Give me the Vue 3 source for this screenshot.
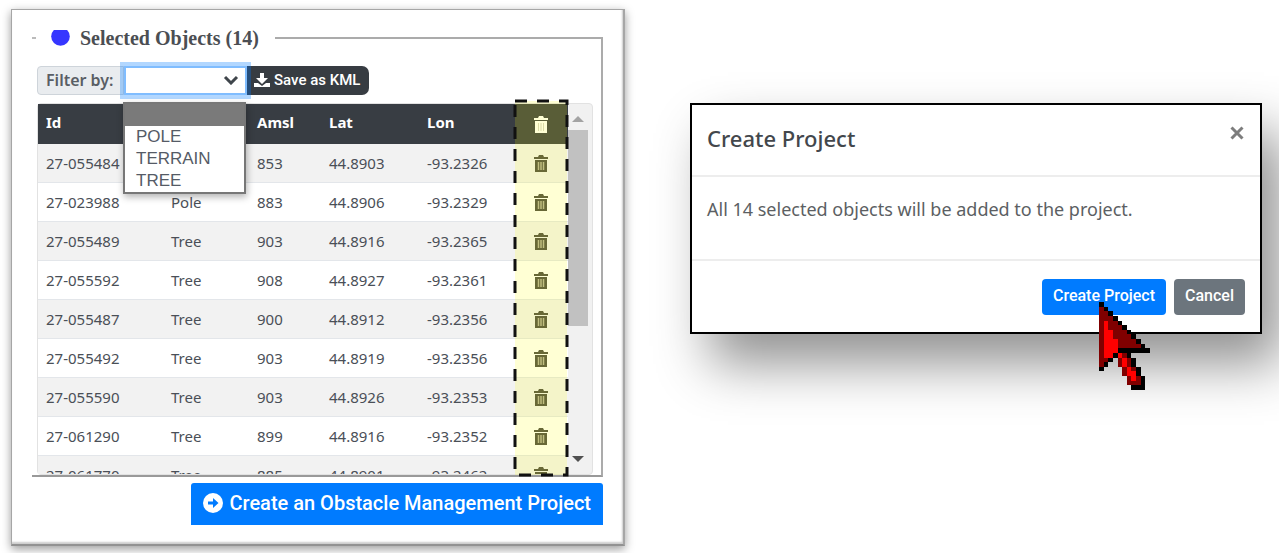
<script setup>
import { ref } from 'vue'

const filter = ref('')
const options = ['', 'POLE', 'TERRAIN', 'TREE']

const rows = [
  { id: '27-055484', type: 'Tree', amsl: 853, lat: '44.8903', lon: '-93.2326' },
  { id: '27-023988', type: 'Pole', amsl: 883, lat: '44.8906', lon: '-93.2329' },
  { id: '27-055489', type: 'Tree', amsl: 903, lat: '44.8916', lon: '-93.2365' },
  { id: '27-055592', type: 'Tree', amsl: 908, lat: '44.8927', lon: '-93.2361' },
  { id: '27-055487', type: 'Tree', amsl: 900, lat: '44.8912', lon: '-93.2356' },
  { id: '27-055492', type: 'Tree', amsl: 903, lat: '44.8919', lon: '-93.2356' },
  { id: '27-055590', type: 'Tree', amsl: 903, lat: '44.8926', lon: '-93.2353' },
  { id: '27-061290', type: 'Tree', amsl: 899, lat: '44.8916', lon: '-93.2352' },
  { id: '27-061770', type: 'Tree', amsl: 885, lat: '44.8901', lon: '-93.2462' },
]

// Pointer bitmap: K outline, D dark red, B bright red
const pointer = [
  'K',
  'DK',
  'DDK',
  'DDDK',
  'DBDDK',
  'DBDDDK',
  'DBBDDDK',
  'DBBDDDDK',
  'DBBBDDDDK',
  'DBBBDDDDDK',
  'DBBBKKKKKKK',
  'DBBKBDK',
  'DDK.DBDK',
  'DK..DBDK',
  'K....DBDK',
  '.....DBBK',
  '......DBDK',
  '......DDDK',
  '.......KKK',
]
const fills = { K: '#000', D: '#800000', B: '#ff0000' }
const cells = pointer.flatMap((line, y) =>
  [...line].map((c, x) => ({ x, y, fill: fills[c] })).filter((c) => c.fill)
)
</script>

<template>
  <main class="page">
    <section class="panel">
      <div class="legend">
        <span class="rule-start"></span>
        <svg class="bullet" viewBox="0 0 19 16" aria-hidden="true">
          <circle cx="9.5" cy="6.5" r="9.3" fill="#3636ff" />
        </svg>
        <h2>Selected Objects (14)</h2>
        <span class="rule-end"></span>
      </div>

      <div class="group">
        <div class="toolbar">
          <label for="filter">Filter by:</label>
          <div class="picker">
            <select id="filter" v-model="filter">
              <option v-for="o in options" :key="o" :value="o">{{ o }}</option>
            </select>
            <svg class="chevron" viewBox="0 0 16 10" aria-hidden="true">
              <path d="M2 2l6 6 6-6" fill="none" stroke="#3f454b" stroke-width="3" />
            </svg>
            <ul class="menu" role="listbox" aria-label="Filter by">
              <li
                v-for="o in options"
                :key="o"
                role="option"
                :aria-selected="o === filter"
                :class="{ active: o === filter }"
                @click="filter = o"
              >{{ o }}</li>
            </ul>
          </div>
          <button class="save" type="button">
            <svg viewBox="0 0 16 16" aria-hidden="true">
              <path fill="#fff" d="M6 1h4v5h4l-6 6-6-6h4zM0 11h4l4 3 4-3h4v4H0z" />
            </svg>
            Save as KML
          </button>
        </div>

        <div class="table-box">
          <div class="table-area">
            <div class="clip">
              <table>
                <colgroup>
                  <col class="c-id" /><col class="c-type" /><col class="c-amsl" />
                  <col class="c-lat" /><col class="c-lon" /><col class="c-del" />
                </colgroup>
                <thead>
                  <tr>
                    <th>Id</th>
                    <th>Type</th>
                    <th>Amsl</th>
                    <th>Lat</th>
                    <th>Lon</th>
                    <th class="del">
                      <button type="button" aria-label="Remove all">
                        <svg viewBox="0 0 14 17" aria-hidden="true">
                          <path fill="#fff" d="M0 2h4l1-2h4l1 2h4v2H0zM1 5h12v12H1z" />
                          <path stroke="#d5d5c8" d="M4.500 7v8M7 7v8M9.500 7v8" />
                        </svg>
                      </button>
                    </th>
                  </tr>
                </thead>
                <tbody>
                  <tr v-for="r in rows" :key="r.id">
                    <td>{{ r.id }}</td>
                    <td>{{ r.type }}</td>
                    <td>{{ r.amsl }}</td>
                    <td>{{ r.lat }}</td>
                    <td>{{ r.lon }}</td>
                    <td class="del">
                      <button type="button" :aria-label="'Remove ' + r.id">
                        <svg viewBox="0 0 14 17" aria-hidden="true">
                          <path fill="#4a4a42" d="M0 2h4l1-2h4l1 2h4v2H0zM1 5h12v12H1z" />
                          <path stroke="#b5b29a" stroke-width="1.500" d="M4.500 7v8M7 7v8M9.500 7v8" />
                        </svg>
                      </button>
                    </td>
                  </tr>
                </tbody>
              </table>
            </div>
            <svg class="highlight" aria-hidden="true">
              <rect width="100%" height="100%" />
            </svg>
          </div>
          <div class="scrollbar" aria-hidden="true">
            <svg viewBox="0 0 12 6"><path d="M0 6l6-6 6 6z" fill="#a3a3a3" /></svg>
            <span class="thumb"></span>
            <svg viewBox="0 0 12 6"><path d="M0 0l6 6 6-6z" fill="#505050" /></svg>
          </div>
        </div>
      </div>

      <button class="create" type="button">
        <svg viewBox="0 0 20 20" aria-hidden="true">
          <circle cx="10" cy="10" r="10" fill="#fff" />
          <path d="M5 8.500h5V5l5.500 5-5.500 5v-3.500H5z" fill="#007bff" />
        </svg>
        Create an Obstacle Management Project
      </button>
    </section>

    <section class="dialog" role="dialog" aria-labelledby="dialog-title">
      <header>
        <h1 id="dialog-title">Create Project</h1>
        <button class="close" type="button" aria-label="Close">
          <svg viewBox="0 0 14 14" aria-hidden="true">
            <path d="M1.500 1.500l11 11M12.500 1.500l-11 11" stroke="#7d7d7d" stroke-width="3" />
          </svg>
        </button>
      </header>
      <p>All 14 selected objects will be added to the project.</p>
      <footer>
        <div class="confirm">
          <button class="primary" type="button">Create Project</button>
          <svg class="pointer" viewBox="0 0 11 19" shape-rendering="crispEdges" aria-hidden="true">
            <rect
              v-for="c in cells"
              :key="c.x + '-' + c.y"
              :x="c.x"
              :y="c.y"
              width="1"
              height="1"
              :fill="c.fill"
            />
          </svg>
        </div>
        <button class="secondary" type="button">Cancel</button>
      </footer>
    </section>
  </main>
</template>

<style>
body {
  background: #fff;
}
</style>

<style scoped>
* {
  box-sizing: border-box;
}

.page {
  display: grid;
  grid-template-columns: 614fr 572fr;
  gap: 65px;
  align-items: start;
  padding: 9px 17px 7px 11px;
  font-family: "Noto Sans", "Open Sans", sans-serif;
  color: #4a4f57;
}

h1,
h2,
p,
ul {
  margin: 0;
  padding: 0;
}

button {
  border: 0;
  cursor: pointer;
}

.panel {
  padding: 16px 20px 19px;
  border: 1px solid #a6a6a6;
  border-right-width: 2px;
  border-bottom: 2px solid #929292;
  box-shadow: 0 3px 9px rgba(0, 0, 0, 0.4), inset -1px -2px 2px #ccc;
}

.legend {
  display: flex;
  align-items: center;
  height: 24px;
}

.rule-start {
  width: 4px;
  height: 2px;
  margin-right: 15px;
  background: #bbb;
}

.bullet {
  width: 19px;
  height: 16px;
  margin-right: 10px;
}

h2 {
  margin-right: 16px;
  font: bold 20px/24px "Liberation Serif", serif;
  color: #4b4e53;
  white-space: nowrap;
}

.rule-end {
  flex: 1;
  align-self: flex-end;
  height: 13px;
  border-top: 2px solid #ababab;
  border-right: 2px solid #ababab;
}

.group {
  padding: 16px 8px 0 5px;
  border-right: 2px solid #ababab;
  border-bottom: 2px solid #999;
}

.toolbar {
  display: flex;
  height: 29px;
  margin-bottom: 8px;
}

.toolbar label {
  width: 87px;
  padding-left: 8px;
  border: 1px solid #ced4da;
  border-radius: 4px 0 0 4px;
  background: #e9ecef;
  font-size: 16px;
  font-weight: 600;
  line-height: 27px;
  color: #595e65;
  white-space: nowrap;
}

.picker {
  position: relative;
  z-index: 2;
  width: 123px;
}

select {
  display: block;
  width: 100%;
  height: 29px;
  border: 2px solid #80bdff;
  border-radius: 0;
  outline: 0;
  background: #fff;
  box-shadow: 0 0 0 4px rgba(0, 123, 255, 0.3);
  appearance: none;
  font: 16px "Liberation Sans", sans-serif;
}

.chevron {
  position: absolute;
  top: 9px;
  right: 8px;
  width: 16px;
  height: 10px;
  pointer-events: none;
}

.menu {
  position: absolute;
  top: 36px;
  left: -1px;
  width: 100%;
  border: 2px solid #777;
  background: #fff;
  box-shadow: 1px 3px 7px rgba(0, 0, 0, 0.3);
  font: 17px/22px "Liberation Sans", sans-serif;
  color: #555b66;
  list-style: none;
}

.menu li {
  height: 22px;
  padding-left: 11px;
}

.menu .active {
  background: #7a7a7a;
}

.save {
  display: flex;
  align-items: center;
  gap: 4px;
  padding: 0 9px 2px 7px;
  border-radius: 0 7px 7px 0;
  background: #373c42;
  color: #fff;
  font: 500 15px Roboto, sans-serif;
  white-space: nowrap;
}

.save svg {
  width: 16px;
  height: 16px;
}

.table-box {
  display: flex;
  height: 372px;
  padding-right: 4px;
  border: 1px solid #e2e2e2;
  border-radius: 4px;
  background: #f1f1f1;
}

.table-area {
  position: relative;
  flex: 1;
  min-width: 0;
}

.clip {
  height: 100%;
  overflow: hidden;
  background: #fff;
}

table {
  width: 100%;
  table-layout: fixed;
  border-spacing: 0;
  font-size: 15px;
}

.c-id { width: 125px; }
.c-type { width: 86px; }
.c-amsl { width: 72px; }
.c-lat { width: 98px; }
.c-del { width: 54px; }

th,
td {
  height: 39px;
  padding: 0 0 0 8px;
  border-bottom: 1px solid #e3e6ea;
  line-height: 20px;
  text-align: left;
  white-space: nowrap;
}

th {
  height: 40px;
  padding-bottom: 4px;
  border-bottom: 0;
  background: #383d43;
  color: #fff;
}

td {
  padding-bottom: 1px;
}

tbody tr:nth-child(odd) {
  background: #f2f2f2;
}

.del {
  padding: 0;
  text-align: center;
}

.del button {
  display: block;
  width: 14px;
  height: 17px;
  margin: 0 auto;
  padding: 0;
  background: none;
}

.del svg {
  display: block;
  width: 14px;
  height: 17px;
}

.highlight {
  position: absolute;
  top: -3px;
  right: 1px;
  width: 52px;
  height: 374px;
  overflow: visible;
  pointer-events: none;
}

.highlight rect {
  fill: rgba(255, 255, 0, 0.17);
  stroke: #111;
  stroke-width: 3;
  stroke-dasharray: 12 10;
}

.scrollbar {
  display: flex;
  flex-direction: column;
  align-items: center;
  width: 20px;
  padding: 12px 0;
}

.scrollbar svg {
  width: 12px;
  height: 6px;
}

.thumb {
  width: 100%;
  height: 196px;
  margin: 8px 0 auto;
  background: #c1c1c1;
}

.create {
  display: flex;
  align-items: center;
  gap: 6px;
  height: 42px;
  margin: 6px 0 0 auto;
  padding: 0 12px 3px;
  border-radius: 3px 3px 0 0;
  background: #007bff;
  color: #fff;
  font: 500 20px Roboto, sans-serif;
  white-space: nowrap;
}

.create svg {
  width: 20px;
  height: 20px;
}

.dialog {
  margin-top: 94px;
  border: 2px solid #000;
  background: #fff;
  box-shadow: 20px 30px 50px rgba(0, 0, 0, 0.43);
}

header {
  display: flex;
  justify-content: space-between;
  align-items: flex-start;
  height: 72px;
  padding: 18px 16px 0 15px;
  border-bottom: 2px solid #ededed;
}

h1 {
  font-size: 22px;
  font-weight: 500;
  line-height: 30px;
  color: #43474c;
}

.close {
  padding: 3px 0;
  background: none;
}

.close svg {
  display: block;
  width: 14px;
  height: 14px;
}

p {
  height: 82px;
  padding: 20px 15px 0;
  font-size: 18px;
  line-height: 24px;
  color: #5c5f63;
}

footer {
  display: flex;
  justify-content: flex-end;
  gap: 8px;
  padding: 18px 15px 17px;
  border-top: 2px solid #ededed;
}

.confirm {
  position: relative;
}

footer button {
  height: 36px;
  padding: 0 11px 3px;
  border-radius: 4px;
  color: #fff;
  font: 500 16px Roboto, sans-serif;
}

.primary {
  background: #007bff;
}

.secondary {
  background: #6c757d;
}

.pointer {
  position: absolute;
  top: 23px;
  left: 57px;
  width: 51px;
  height: 88px;
  pointer-events: none;
}
</style>
